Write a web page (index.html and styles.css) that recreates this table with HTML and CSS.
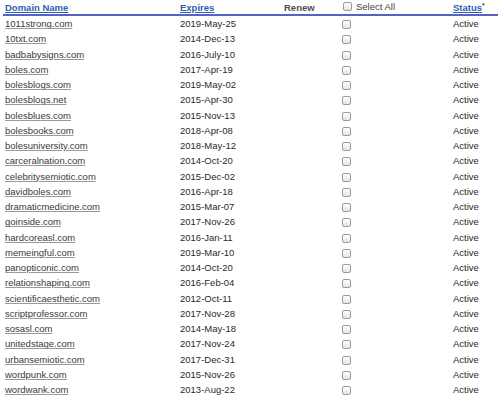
FILE: index.html
```html
<!DOCTYPE html>
<html>
<head>
<meta charset="utf-8">
<link rel="stylesheet" href="styles.css">
</head>
<body>
<table class="domains">
  <colgroup>
    <col class="c-name"><col class="c-exp"><col class="c-renew"><col class="c-sel"><col class="c-status">
  </colgroup>
  <thead>
    <tr>
      <th class="name"><a href="#" class="sort">Domain Name</a></th>
      <th class="exp"><a href="#" class="sort">Expires</a></th>
      <th class="renew">Renew</th>
      <th class="sel"><label class="selall"><input type="checkbox" class="cb">Select All</label></th>
      <th class="status"><a href="#" class="sort">Status</a><span class="star">*</span></th>
    </tr>
  </thead>
  <tbody>
    <tr><td class="name"><a href="#">1011strong.com</a></td><td>2019-May-25</td><td></td><td class="sel"><input type="checkbox" class="cb"></td><td class="status">Active</td></tr>
    <tr><td class="name"><a href="#">10txt.com</a></td><td>2014-Dec-13</td><td></td><td class="sel"><input type="checkbox" class="cb"></td><td class="status">Active</td></tr>
    <tr><td class="name"><a href="#">badbabysigns.com</a></td><td>2016-July-10</td><td></td><td class="sel"><input type="checkbox" class="cb"></td><td class="status">Active</td></tr>
    <tr><td class="name"><a href="#">boles.com</a></td><td>2017-Apr-19</td><td></td><td class="sel"><input type="checkbox" class="cb"></td><td class="status">Active</td></tr>
    <tr><td class="name"><a href="#">bolesblogs.com</a></td><td>2019-May-02</td><td></td><td class="sel"><input type="checkbox" class="cb"></td><td class="status">Active</td></tr>
    <tr><td class="name"><a href="#">bolesblogs.net</a></td><td>2015-Apr-30</td><td></td><td class="sel"><input type="checkbox" class="cb"></td><td class="status">Active</td></tr>
    <tr><td class="name"><a href="#">bolesblues.com</a></td><td>2015-Nov-13</td><td></td><td class="sel"><input type="checkbox" class="cb"></td><td class="status">Active</td></tr>
    <tr><td class="name"><a href="#">bolesbooks.com</a></td><td>2018-Apr-08</td><td></td><td class="sel"><input type="checkbox" class="cb"></td><td class="status">Active</td></tr>
    <tr><td class="name"><a href="#">bolesuniversity.com</a></td><td>2018-May-12</td><td></td><td class="sel"><input type="checkbox" class="cb"></td><td class="status">Active</td></tr>
    <tr><td class="name"><a href="#">carceralnation.com</a></td><td>2014-Oct-20</td><td></td><td class="sel"><input type="checkbox" class="cb"></td><td class="status">Active</td></tr>
    <tr><td class="name"><a href="#">celebritysemiotic.com</a></td><td>2015-Dec-02</td><td></td><td class="sel"><input type="checkbox" class="cb"></td><td class="status">Active</td></tr>
    <tr><td class="name"><a href="#">davidboles.com</a></td><td>2016-Apr-18</td><td></td><td class="sel"><input type="checkbox" class="cb"></td><td class="status">Active</td></tr>
    <tr><td class="name"><a href="#">dramaticmedicine.com</a></td><td>2015-Mar-07</td><td></td><td class="sel"><input type="checkbox" class="cb"></td><td class="status">Active</td></tr>
    <tr><td class="name"><a href="#">goinside.com</a></td><td>2017-Nov-26</td><td></td><td class="sel"><input type="checkbox" class="cb"></td><td class="status">Active</td></tr>
    <tr><td class="name"><a href="#">hardcoreasl.com</a></td><td>2016-Jan-11</td><td></td><td class="sel"><input type="checkbox" class="cb"></td><td class="status">Active</td></tr>
    <tr><td class="name"><a href="#">memeingful.com</a></td><td>2019-Mar-10</td><td></td><td class="sel"><input type="checkbox" class="cb"></td><td class="status">Active</td></tr>
    <tr><td class="name"><a href="#">panopticonic.com</a></td><td>2014-Oct-20</td><td></td><td class="sel"><input type="checkbox" class="cb"></td><td class="status">Active</td></tr>
    <tr><td class="name"><a href="#">relationshaping.com</a></td><td>2016-Feb-04</td><td></td><td class="sel"><input type="checkbox" class="cb"></td><td class="status">Active</td></tr>
    <tr><td class="name"><a href="#">scientificaesthetic.com</a></td><td>2012-Oct-11</td><td></td><td class="sel"><input type="checkbox" class="cb"></td><td class="status">Active</td></tr>
    <tr><td class="name"><a href="#">scriptprofessor.com</a></td><td>2017-Nov-28</td><td></td><td class="sel"><input type="checkbox" class="cb"></td><td class="status">Active</td></tr>
    <tr><td class="name"><a href="#">sosasl.com</a></td><td>2014-May-18</td><td></td><td class="sel"><input type="checkbox" class="cb"></td><td class="status">Active</td></tr>
    <tr><td class="name"><a href="#">unitedstage.com</a></td><td>2017-Nov-24</td><td></td><td class="sel"><input type="checkbox" class="cb"></td><td class="status">Active</td></tr>
    <tr><td class="name"><a href="#">urbansemiotic.com</a></td><td>2017-Dec-31</td><td></td><td class="sel"><input type="checkbox" class="cb"></td><td class="status">Active</td></tr>
    <tr><td class="name"><a href="#">wordpunk.com</a></td><td>2015-Nov-26</td><td></td><td class="sel"><input type="checkbox" class="cb"></td><td class="status">Active</td></tr>
    <tr><td class="name"><a href="#">wordwank.com</a></td><td>2013-Aug-22</td><td></td><td class="sel"><input type="checkbox" class="cb"></td><td class="status">Active</td></tr>
  </tbody>
</table>
</body>
</html>
```

FILE: styles.css
```css
html, body {
  margin: 0;
  padding: 0;
  background: #ffffff;
}
body {
  font-family: "Liberation Sans", Arial, sans-serif;
  font-size: 9.5px;
  color: #2a2a2a;
}
.domains {
  margin-left: 3px;
  width: 495px;
  border-collapse: collapse;
  table-layout: fixed;
}
.c-name { width: 177px; }
.c-exp { width: 100px; }
.c-renew { width: 59px; }
.c-sel { width: 113px; }
.c-status { width: 46px; }

.domains th, .domains td {
  padding: 0;
  text-align: left;
  white-space: nowrap;
  vertical-align: middle;
}
.domains thead th {
  height: 14px;
  border-bottom: 2px solid #5763c2;
  font-weight: bold;
  color: #333;
}
.domains th.name, .domains td.name { padding-left: 2px; }
.domains th.renew { padding-left: 4px; color: #505050; }
.domains th.sel { padding-left: 4px; }
.domains td.sel { padding-left: 3px; }
.domains th.status { padding-left: 1px; }
.domains td.status { padding-left: 1px; }

.sort {
  color: #2d5fae;
  text-decoration: underline;
  text-decoration-color: #2d5fae;
  text-underline-offset: 1px;
}
.star {
  font-size: 7px;
  vertical-align: top;
  color: #555;
}
.selall {
  display: inline-flex;
  align-items: center;
  gap: 4px;
  font-weight: normal;
  color: #444;
}
.domains tbody td {
  height: 15.25px;
}
.domains tbody td.name a {
  color: #3a3a3a;
  text-decoration: underline;
  text-decoration-color: #9a9a9a;
  text-underline-offset: 1px;
}
.cb {
  appearance: none;
  -webkit-appearance: none;
  display: inline-block;
  width: 9px;
  height: 9px;
  margin: 0;
  border: 1px solid #9c9c9c;
  border-radius: 2px;
  background: linear-gradient(#ffffff, #e4e4e4);
  vertical-align: middle;
  box-sizing: border-box;
}
```
